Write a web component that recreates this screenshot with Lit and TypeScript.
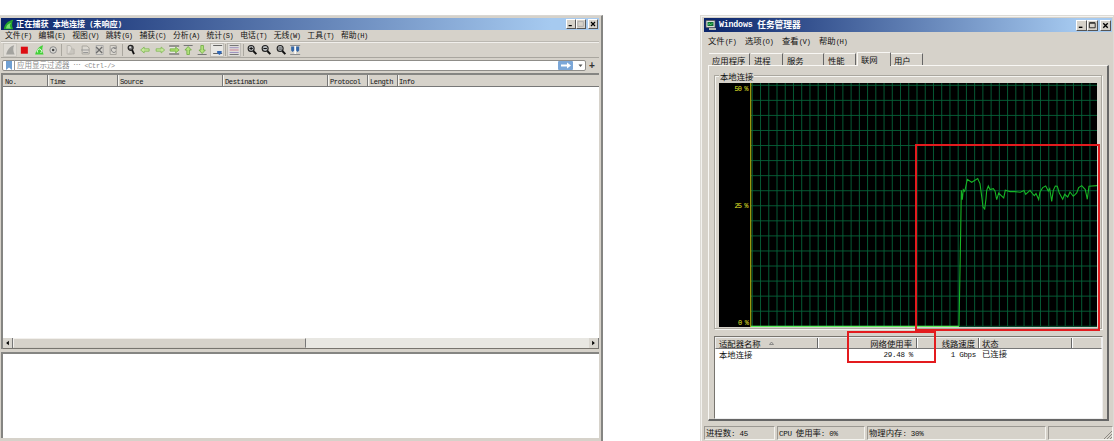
import { LitElement, html, css, svg } from "lit";
import { customElement } from "lit/decorators.js";

/* Splits a label into full-width and half-width runs so each keeps its cell size. */
const label = (s: string) =>
  (s.match(/[\x20-\x7e]+|[^\x20-\x7e]+/g) || []).map((r) =>
    /^[\x20-\x7e]/.test(r) ? html`<span class="lat">${r}</span>` : html`<span>${r}</span>`
  );

const base = css`
  * { box-sizing: border-box; }
  .row { display: flex; white-space: pre; }
  .lat { font-family: "Liberation Mono", monospace; font-size: 0.9em; letter-spacing: -0.04em; }
  svg { display: block; flex: none; }
  .title { display: flex; align-items: center; color: #fff; font-weight: 700; white-space: pre;
    background: linear-gradient(90deg, #0a246a, #a6caf0 92%); }
  .btns { margin-left: auto; display: flex; }
  .btn { background: #d6d2ca; border: 1px solid; border-color: #fff #555 #555 #fff; }
`;

const minimize = svg`<path d="M2 7h4" stroke="#000" stroke-width="1.5"/>`;
const closeX = svg`<path d="M2.5 2.5l5 5M7.5 2.5l-5 5" stroke="#000" stroke-width="1.5"/>`;

const lens = (inner: unknown) => svg`<circle cx="6" cy="5.5" r="3" fill="#b7bbbd" stroke="#222" stroke-width="1.1"/>
  <path d="M8.2 8l3 3.2" stroke="#111" stroke-width="1.9"/>${inner}`;

const icons: Record<string, unknown> = {
  fin: svg`<rect x=".5" y=".5" width="13" height="13" fill="#dedbd5" stroke="#c3c0b9" stroke-width=".7"/><path d="M3 11.5C4 7 6.500 3.500 11 2.200C9.600 5 10 8.500 11.500 11.500Z" fill="#a3a39f"/>`,
  stop: svg`<rect x="3.700" y="3.700" width="7" height="7" fill="#dd0d12"/>`,
  restart: svg`<path d="M3 11.500C4 7 6.500 3.500 11 2.200C9.600 5 10 8.500 11.500 11.500Z" fill="#43d238"/><path d="M5.500 9.500a2.200 2.200 0 1 1 3 .5" fill="none" stroke="#e8ffe4"/>`,
  gear: svg`<circle cx="7" cy="7" r="3.300" fill="#d9d9d5" stroke="#888"/><circle cx="7" cy="7" r="1.300" fill="#444"/>`,
  open: svg`<path d="M4 2.500h3l1.500 2v6.500H4z" fill="#dedbd5" stroke="#b4b1aa" stroke-width=".8"/><path d="M8 6h3v5H5" fill="#c9c6bf" stroke="#b4b1aa" stroke-width=".8"/>`,
  save: svg`<path d="M4 3h5l2 2v6H4z" fill="#dcd9d2" stroke="#aaa79f"/><path d="M3 7h8M5 9.500h5" stroke="#999" />`,
  shut: svg`<path d="M4 2.500h7v9H4z" fill="#d8d5ce" stroke="#aaa"/><path d="M4 4l6 6M10 4l-6 6" stroke="#6c6c6c" stroke-width="1.300"/>`,
  reload: svg`<path d="M4 2.500h6v9H4z" fill="#dad7d0" stroke="#a8a59e"/><path d="M9.800 5.500A2.500 2.500 0 1 0 9.700 8.500M7.500 5.500h2.500v-2" fill="none" stroke="#888"/>`,
  find: svg`<circle cx="6.500" cy="4.800" r="2.500" fill="#777" stroke="#222" stroke-width="1.200"/><path d="M8 7l1.800 4.200" stroke="#111" stroke-width="1.900"/><circle cx="6" cy="4.200" r="1" fill="#ddd"/>`,
  back: svg`<path d="M2.500 7l3.500-3v1.800h5v2.400H6V10z" fill="#c6e89b" stroke="#7db853" stroke-width=".8"/>`,
  next: svg`<path d="M11.500 7L8 4v1.800H3v2.400h5V10z" fill="#c6e89b" stroke="#7db853" stroke-width=".8"/>`,
  goto: svg`<path d="M2 3h10M2 11h10" stroke="#555"/><path d="M2.500 5h8M2.500 9h8" stroke="#fff"/><path d="M12 7L8.500 4v1.800H3v2.400h5.500V10z" fill="#a9dc67" stroke="#6cab40" stroke-width=".7"/>`,
  first: svg`<path d="M2.500 2.500h9" stroke="#777"/><path d="M7 3.500L3.800 7h1.900v4.500h2.600V7h1.900z" fill="#b5e37e" stroke="#6cab40" stroke-width=".8"/>`,
  last: svg`<path d="M2.500 11.500h9" stroke="#777"/><path d="M7 10.500L3.800 7h1.900V2.500h2.600V7h1.900z" fill="#b5e37e" stroke="#6cab40" stroke-width=".8"/>`,
  scroll: svg`<rect x=".5" y=".5" width="13" height="13" fill="#e8e7e3" stroke="#b3b0a9" stroke-width=".7"/><path d="M3 2.500h9M3 10.500h9" stroke="#555" stroke-width=".9"/><path d="M7 8h4.500v2L9.300 12 7 10z" fill="#3067b5"/>`,
  color: svg`<rect x=".5" y=".5" width="13" height="13" fill="#dedcd9" stroke="#b3b0a9" stroke-width=".7"/><path d="M2.500 2.500h9M2.500 11.500h9" stroke="#777"/><path d="M2.500 4.700h9M2.500 9.500h9" stroke="#9d93bf"/><path d="M2.500 7h9" stroke="#cf8292"/>`,
  zin: lens(svg`<path d="M4.300 5.500h3.400M6 3.800v3.400" stroke="#111"/>`),
  zout: lens(svg`<path d="M4.300 5.500h3.400" stroke="#111"/>`),
  zeq: lens(svg`<path d="M4.300 4.900h3.400M4.300 6.300h3.400" stroke="#444" stroke-width=".7"/>`),
  cols: svg`<path d="M2 2.500h10M2 11.500h10" stroke="#8b8d90"/><path d="M7 3v8" stroke="#fff" stroke-width="1.500"/><path d="M3 3.500h3v4L4.500 9 3 7.500zM8 3.500h3v4L9.500 9 8 7.500z" fill="#3467a8"/>`,
};
const tools = ["fin", "stop", "restart", "gear", "|", "open", "save", "shut", "reload", "|", "find", "back", "next", "goto", "first", "last", "scroll", "|", "color", "|", "zin", "zout", "zeq", "cols"];

@customElement("capture-window")
export class CaptureWindow extends LitElement {
  static styles = [base, css`
    :host { display: flex; flex-direction: column; width: 603px; height: 426px; background: #d6d2ca;
      font: 8.1px/10px "Noto Sans CJK SC", sans-serif; color: #111;
      border-top: 1px solid #d9d7d3; border-right: 2px solid #858582; padding: 2px 2px 0 1px; box-sizing: border-box; }
    .title { height: 12px; padding: 0 1px 0 2px; font-size: 8.15px; }
    .title svg { margin-right: 2px; }
    .btns svg { height: 10px; width: 10px; margin: 0; }
    .btns .gap { margin-left: 2px; }
    .menu { height: 12px; padding-left: 4px; align-items: center; border-bottom: 1px solid #bbb8b1; font-size: 7.8px; }
    .menu div { width: 33.6px; flex: none; }
    .menu .lat { font-size: 7px; letter-spacing: -0.5px; }
    .tools { height: 16px; border-top: 1px solid #f1efeb; border-bottom: 1px solid #a9a69f; padding-left: 2px; align-items: center; }
    .tool { width: 14.3px; height: 14px; }
    .sep { width: 3.3px; height: 12px; display: flex; justify-content: center; flex: none; }
    .sep i { width: 1px; background: #aaa79f; }
    .filter { height: 13px; margin-top: 1px; align-items: center; padding-left: 1px; }
    .field { width: 584px; height: 11px; display: flex; align-items: center; background: #fff; border: 1px solid #8f8d89; border-radius: 2px; color: #8b8b8b; }
    .mark { margin: 0 2px 0 3px; }
    .hint { border-left: 1px solid #999; padding-left: 2px; white-space: pre; line-height: 9px; font-size: 7.5px; }
    .go { margin-left: auto; }
    .plus { font: 700 10px/10px "Liberation Sans", sans-serif; margin-left: 3px; color: #333; }
    .list { margin-top: 1px; height: 276px; border-top: 2px solid #858582; border-left: 2px solid #858582; background: #fff; display: flex; flex-direction: column; }
    .heads { height: 12px; background: #d6d2ca; align-items: center; border-bottom: 1px solid #777; line-height: 11px; }
    .heads div { height: 11px; padding-left: 2px; border-right: 1px solid #777; box-shadow: 1px 0 #f5f4f0; flex: none; }
    .heads div:last-child { border: 0; box-shadow: none; padding-left: 1px; }
    .heads .lat { font-size: 7.1px; letter-spacing: -0.42px; }
    .w1 { width: 45px; } .w2 { width: 70px; } .w3 { width: 105px; } .w4 { width: 105px; } .w5 { width: 40px; } .w6 { width: 30px; }
    .bar { display: flex; height: 11px; margin-top: auto; background: #e8e7e2; border-bottom: 1px solid #77746e; flex: none; }
    .arrow { width: 10px; height: 10px; background: #d9d6cf; border-right: 1px solid #777; }
    .thumb { width: 293px; background: #d6d2ca; border: 1px solid; border-color: #f2f0ec #777 #d0ccc4 #f2f0ec; }
    .end { margin-left: auto; }
    .detail { margin-top: 3px; height: 86px; background: #fff; border-top: 2px solid #858582; border-left: 2px solid #858582; }
  `];
  render() {
    return html`
      <div class="title">
        <svg width="11" height="11" viewBox="0 0 14 14"><path d="M1 13C2 7 6 2 13 1C11 5 11 9 13 13Z" fill="#25a72b"/><path d="M4 12c0-4 3-6 6-7c-2 3-1 5 0 7z" fill="#7be271"/></svg>
        ${label("正在捕获 本地连接 (未响应)")}
        <div class="btns">
          <svg class="btn" viewBox="0 0 10 10">${minimize}</svg>
          <svg class="btn" viewBox="0 0 10 10"><path d="M1 2h7v6H1z" fill="none" stroke="#aaa"/></svg>
          <svg class="btn gap" viewBox="0 0 10 10">${closeX}</svg>
        </div>
      </div>
      <div class="row menu">${["文件(F)", "编辑(E)", "视图(V)", "跳转(G)", "捕获(C)", "分析(A)", "统计(S)", "电话(T)", "无线(W)", "工具(T)", "帮助(H)"].map((m) => html`<div>${label(m)}</div>`)}</div>
      <div class="row tools">${tools.map((t) => t === "|" ? html`<span class="sep"><i></i></span>` : html`<svg class="tool" viewBox="0 0 14 14">${icons[t]}</svg>`)}</div>
      <div class="row filter">
        <div class="field">
          <svg class="mark" width="6" height="9" viewBox="0 0 6 9"><path d="M0 0h6v9L3 6.500 0 9z" fill="#6f9fd2"/></svg>
          <span class="hint">${label("应用显示过滤器 … <Ctrl-/>")}</span>
          <svg class="go" width="27" height="9" viewBox="0 0 27 9"><rect width="15" height="9" rx="1" fill="#7ba7d8"/><path d="M3 4.500h7" stroke="#fff" stroke-width="2"/><path d="M9 1.500l4 3-4 3z" fill="#fff"/><path d="M20.500 3.500h4l-2 2.500z" fill="#555"/></svg>
        </div>
        <span class="plus">+</span>
      </div>
      <div class="list">
        <div class="row heads">${["No.", "Time", "Source", "Destination", "Protocol", "Length", "Info"].map((h, i) => html`<div class="w${i + 1}">${label(h)}</div>`)}</div>
        <div class="bar">
          <svg class="arrow" viewBox="0 0 10 10"><path d="M6.500 2.500v5l-3-2.500z" fill="#000"/></svg>
          <div class="thumb"></div>
          <svg class="arrow end" viewBox="0 0 10 10"><path d="M3.500 2.500v5l3-2.500z" fill="#000"/></svg>
        </div>
      </div>
      <div class="detail"></div>`;
  }
}

/* Throughput samples in plot coordinates (origin at the plot's top-left corner). */
const samples: [number, number][] = ([
  [177, 588], [182, 300], [184, 180], [187, 208], [190, 178], [194, 183], [197, 170], [202, 147], [215, 156], [233, 145], [240, 160], [246, 205], [249, 230], [254, 236], [258, 205], [260, 180], [265, 167], [270, 178], [280, 175], [285, 182], [290, 208], [296, 188], [303, 195], [311, 203], [316, 180], [330, 184], [345, 184], [361, 186], [372, 181], [377, 192], [390, 180], [396, 188], [403, 196], [408, 190], [416, 208], [420, 185], [428, 172], [437, 167], [445, 182], [449, 175], [455, 213], [460, 180], [466, 167], [472, 168], [478, 188], [488, 207], [494, 192], [503, 200], [510, 185], [520, 198], [530, 188], [536, 172], [545, 166], [556, 178], [562, 207], [567, 168], [592, 166],
] as [number, number][]).map(([x, y]) => [x / 3 + 181, y / 3 + 47.3]);

@customElement("task-manager")
export class TaskManager extends LitElement {
  static styles = [base, css`
    :host { display: flex; flex-direction: column; width: 414px; height: 426px; background: #d6d2ca; position: relative;
      font: 8.35px/10px "Noto Sans CJK SC", sans-serif; color: #111;
      border: 1px solid #dcdad5; border-bottom: 0; box-shadow: inset 1px 1px #f3f2ef; padding: 2px 1px 0 3px; box-sizing: border-box; }
    .title { height: 14px; padding: 0 1px 0 1px; font-size: 8.7px; }
    .title svg { margin-right: 2px; }
    .title .lat { font-size: 8.3px; letter-spacing: -0.2px; }
    .btns svg { width: 11px; height: 11px; margin: 0; }
    .btns .gap { margin-left: 2px; }
    .menu { height: 20px; padding: 3px 0 0 4px; }
    .menu div { width: 37px; }
    .menu .lat { font-size: 7.3px; letter-spacing: -0.5px; }
    .tabs { height: 14px; padding-left: 5px; align-items: flex-end; margin-bottom: -1px; z-index: 1; }
    .tab { height: 12px; padding: 0 0 0 3px; line-height: 12px; border-top: 1px solid #f8f7f4; border-right: 1px solid #666; margin: 0 1px 1px 0; flex: none; }
    .tab.on { height: 14px; background: #d6d2ca; margin: 0; border-left: 1px solid #f8f7f4; padding-left: 3px; line-height: 12px; }
    .panel { margin-left: 4px; width: 401px; height: 356px; border: 1px solid; border-color: #f8f7f4 #666 #666 #f8f7f4; border-right-width: 2px; border-bottom-width: 2px; padding: 9px 6px 0 5px; }
    .group { height: 254px; width: 388px; border: 1px solid #aaa79f; box-shadow: inset 1px 1px #f5f4f0, 1px 1px #f5f4f0; padding: 0 4px; }
    .legend { display: table; background: #d6d2ca; margin: -5px 0 1px; padding: 0 1px; height: 11px; }
    .plot text { font: 7px "Liberation Mono", monospace; fill: #e6e62a; }
    .list { margin-top: 7px; width: 389px; height: 83px; background: #fff; border: 1px solid #77746e; border-right-color: #eee; border-bottom-color: #eee; }
    .heads { height: 12px; background: #d6d2ca; border: 1px solid; border-color: #eee #eee #777 #eee; line-height: 11px; }
    .heads div { border-right: 1px solid #666; box-shadow: 1px 0 #fff; }
    .c1, .c2, .c3, .c4 { flex: none; }
    .c1 { width: 102px; padding-left: 3px; display: flex; align-items: center; }
    .c1 svg { margin-left: 8px; }
    .c2 { width: 99px; text-align: right; padding-right: 4px; }
    .c3 { width: 62px; text-align: right; padding-right: 3px; }
    .c4 { width: 93px; padding-left: 3px; }
    .cells { padding-left: 1px; margin-top: -1px; }
    .status { margin-top: 5px; height: 14px; gap: 2px; }
    .cell { border: 1px solid; border-color: #9b9892 #f5f4f0 #f5f4f0 #9b9892; line-height: 11px; flex: none; padding-left: 1px; }
    .s1 { width: 71px; } .s2 { width: 88px; } .s3 { width: 179px; } .s4 { width: 65px; display: flex; justify-content: flex-end; align-items: flex-end; }
    .mark { position: absolute; border: 2px solid #e31b1e; pointer-events: none; }
    .m1 { left: 214px; top: 128px; width: 185px; height: 187px; }
    .m2 { left: 146px; top: 315px; width: 89px; height: 32px; }
  `];
  render() {
    const cols = Array.from({ length: 42 }, (_, i) => 33.300 + i * 8.235);
    const rows = Array.from({ length: 16 }, (_, i) => 2.300 + i * 15.060);
    const tabs: [string, number][] = [["应用程序", 41], ["进程", 32], ["服务", 40], ["性能", 31], ["联网", 34], ["用户", 32]];
    return html`
      <div class="title">
        <svg width="12" height="12" viewBox="0 0 12 12"><path d="M1 1.500h9v7H1z" fill="#d8dedb" stroke="#555" stroke-width=".7"/><path d="M2.500 3h6v4h-6z" fill="#116f36"/><path d="M3 5.500l1.500-1 1 1.500 2-2" fill="none" stroke="#5df078" stroke-width=".8"/><path d="M4 9h7v2H4z" fill="#b5bab4"/></svg>
        ${label("Windows 任务管理器")}
        <div class="btns">
          <svg class="btn" viewBox="0 0 10 10">${minimize}</svg>
          <svg class="btn" viewBox="0 0 10 10"><path d="M1.500 2.500h6.500v5H1.500zM1.500 1.800H8" fill="none" stroke="#222"/></svg>
          <svg class="btn gap" viewBox="0 0 10 10">${closeX}</svg>
        </div>
      </div>
      <div class="row menu">${["文件(F)", "选项(O)", "查看(V)", "帮助(H)"].map((m) => html`<div>${label(m)}</div>`)}</div>
      <div class="row tabs">${tabs.map(([t, w]) => html`<div class="tab ${t === "联网" ? "on" : ""}" style="width:${w}px">${t}</div>`)}</div>
      <div class="panel">
        <div class="group">
          <span class="legend">本地连接</span>
          <svg class="plot" width="378" height="244" viewBox="0 0 378 244">
            <rect width="378" height="244" fill="#000"/>
            ${cols.map((x) => svg`<path d="M${x} 0V243" stroke="#07633a" stroke-width=".9"/>`)}
            ${rows.map((y) => svg`<path d="M32 ${y}H378" stroke="#07633a" stroke-width=".9"/>`)}
            <path d="M32 243.300H378" stroke="#07633a" stroke-width=".9"/>
            <path d="M31.700 0V244" stroke="#a8a810" stroke-width="1.200"/>
            <path d="M32 243.300H240" stroke="#5cf05c" stroke-width="1.300"/>
            <polyline points="${samples.map((p) => p.map((n) => n.toFixed(1)).join(",")).join(" ")}" fill="none" stroke="#16b526" stroke-width="1.100"/>
            <text x="15.500" y="7.500" textLength="14">50 %</text>
            <text x="15.500" y="124.500" textLength="14">25 %</text>
            <text x="19" y="242" textLength="11">0 %</text>
          </svg>
        </div>
        <div class="list">
          <div class="row heads">
            <div class="c1">适配器名称<svg width="5" height="4" viewBox="0 0 5 4"><path d="M.5 3.500l2-2.500 2 2.500z" fill="none" stroke="#777" stroke-width=".8"/></svg></div>
            <div class="c2">网络使用率</div><div class="c3">线路速度</div><div class="c4">状态</div>
          </div>
          <div class="row cells">
            <span class="c1">本地连接</span><span class="c2">${label("29.48 %")}</span><span class="c3">${label("1 Gbps")}</span><span class="c4">已连接</span>
          </div>
        </div>
      </div>
      <div class="row status">
        <div class="cell s1">${label("进程数: 45")}</div>
        <div class="cell s2">${label("CPU 使用率: 0%")}</div>
        <div class="cell s3">${label("物理内存: 30%")}</div>
        <div class="cell s4"><svg width="9" height="9" viewBox="0 0 9 9"><path d="M1 9l8-8M4 9l5-5M7 9l2-2" stroke="#8c8982"/></svg></div>
      </div>
      <div class="mark m1"></div>
      <div class="mark m2"></div>`;
  }
}

@customElement("app-root")
export class AppRoot extends LitElement {
  static styles = css`
    :host { display: flex; justify-content: space-between; width: 1114px; height: 441px; background: #fff; padding-top: 15px; box-sizing: border-box; overflow: hidden; }
  `;
  render() {
    return html`<capture-window></capture-window><task-manager></task-manager>`;
  }
}
